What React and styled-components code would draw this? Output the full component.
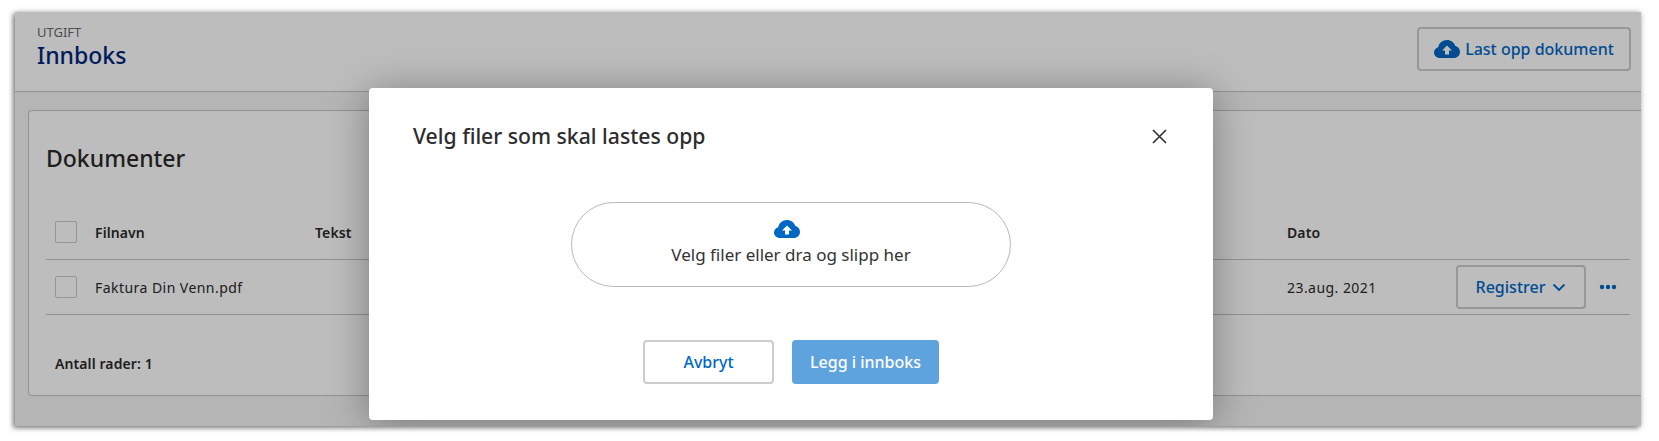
import React from "react";
import styled, { createGlobalStyle } from "styled-components";

const FONT = `"Noto Sans", Lato, sans-serif`;

const Global = createGlobalStyle`
  html, body { margin: 0; padding: 0; background: #fff; }
  body { font-family: ${FONT}; }
  * { box-sizing: border-box; }
`;

const Page = styled.div`
  width: 1659px;
  height: 441px;
  padding: 12px 18px 15px 15px;
  overflow: hidden;
`;

const Window = styled.div`
  position: relative;
  height: 414px;
  background: #f5f5f5;
  box-shadow: -2px 2px 5px rgba(0, 0, 0, 0.45), 0 0 6px rgba(0, 0, 0, 0.2);
`;

const Clip = styled.div`
  position: absolute;
  inset: 0;
  overflow: hidden;
`;

const Header = styled.header`
  height: 80px;
  background: #fff;
  border-bottom: 1px solid #c4c4c4;
  display: flex;
  align-items: flex-start;
  justify-content: space-between;
  padding: 15px 10px 0 22px;
`;

const TitleBlock = styled.div`
  margin-top: -2px;
`;

const Eyebrow = styled.div`
  font-size: 13px;
  line-height: 14px;
  color: #6a6a6a;
`;

const PageTitle = styled.h1`
  margin: 3px 0 0;
  font-size: 23px;
  line-height: 27px;
  font-weight: 500;
  color: #00267a;
`;

const OutlineButton = styled.button`
  height: 44px;
  width: ${(p) => p.$w}px;
  background: #fff;
  border: 2px solid #ccc;
  border-radius: 4px;
  color: #0067c5;
  font: 500 16px ${FONT};
  display: inline-flex;
  align-items: center;
  justify-content: center;
  gap: ${(p) => p.$gap || 5}px;
  padding: 0;
`;

const Body = styled.main`
  padding: 18px 0 0 13px;
`;

const Card = styled.section`
  height: 286px;
  margin-right: -1px;
  background: #fff;
  border: 1px solid #c4c4c4;
  border-right: none;
  border-radius: 4px 0 0 4px;
  padding: 32px 12px 0 17px;
`;

const CardTitle = styled.h2`
  margin: 0;
  height: 62px;
  font-size: 23px;
  line-height: 30px;
  font-weight: 500;
  color: #2a2a2a;
`;

const Row = styled.div`
  display: grid;
  grid-template-columns: 40px 220px 1fr 169px 174px;
  align-items: center;
  height: 55px;
  padding-left: 9px;
  border-bottom: 1px solid #c4c4c4;
  font-size: 14px;
  letter-spacing: ${(p) => (p.$head ? 0.1 : 0.45)}px;
  color: #2a2a2a;
  font-weight: ${(p) => (p.$head ? 600 : 400)};
`;

const Check = styled.span`
  display: block;
  width: 22px;
  height: 22px;
  border: 1px solid #c8c8c8;
  border-radius: 2px;
  background: #fff;
`;

const Actions = styled.div`
  display: flex;
  align-items: center;
  gap: 13px;
`;

const Dots = styled.svg`
  width: 18px;
  height: 6px;
  color: #0067c5;
`;

const Count = styled.div`
  margin: 40px 0 0 9px;
  font-size: 14px;
  line-height: 18px;
  font-weight: 600;
  letter-spacing: 0.1px;
  color: #2a2a2a;
`;

const Overlay = styled.div`
  position: absolute;
  inset: 0;
  background: rgba(0, 0, 0, 0.26);
`;

const Modal = styled.div`
  position: absolute;
  left: 354px;
  top: 76px;
  width: 844px;
  height: 332px;
  background: #fff;
  border-radius: 4px;
  box-shadow: 0 4px 40px rgba(0, 0, 0, 0.35);
  padding: 34px 44px 0 44px;
`;

const ModalHead = styled.div`
  display: flex;
  align-items: center;
  justify-content: space-between;
  height: 28px;
`;

const ModalTitle = styled.h2`
  margin: 0;
  font-size: 21.2px;
  line-height: 28px;
  font-weight: 500;
  color: #2c2c2c;
`;

const Close = styled.button`
  width: 20px;
  height: 20px;
  padding: 0;
  border: 0;
  background: none;
  color: #333;
  display: flex;
  align-items: center;
  justify-content: center;
`;

const Drop = styled.div`
  width: 440px;
  height: 85px;
  margin: 52px 0 0 158px;
  border: 1px solid #b8b8b8;
  border-radius: 43px;
  display: flex;
  flex-direction: column;
  align-items: center;
  padding-top: 17px;
  font-size: 17px;
  line-height: 20px;
  color: #333;
`;

const DropIcon = styled.span`
  display: flex;
  height: 18px;
  margin: 0 8px 7px 0;
  color: #0067c5;
`;

const Footer = styled.div`
  display: flex;
  align-items: center;
  gap: 18px;
  margin: 53px 0 0 230px;
`;

const PrimaryButton = styled.button`
  width: 147px;
  height: 44px;
  padding: 0;
  border: 0;
  border-radius: 4px;
  background: #5ea3de;
  color: #fff;
  font: 500 16px ${FONT};
`;

const Cloud = ({ w = 26, h = 18 }) => (
  <svg width={w} height={h} viewBox="0 0 26 18" aria-hidden="true">
    <path
      fill="currentColor"
      d="M6 18C2.700 18 0 15.600 0 12.500 0 10 1.700 8 4.200 7.300 5 3 8.700 0 13 0c3.800 0 7 2.300 8.200 5.800 2.800.800 4.800 3.300 4.800 6.200 0 3.400-2.900 6-6.300 6Z"
    />
    <path fill="#fff" d="M13 5.500 18 10.500H15v4h-4v-4H8Z" />
  </svg>
);

const Chevron = () => (
  <svg width="14" height="9" viewBox="0 0 14 9" aria-hidden="true">
    <path d="M1.500 1.500 7 7l5.500-5.500" fill="none" stroke="currentColor" strokeWidth="1.800" />
  </svg>
);

export default function App() {
  return (
    <Page>
      <Global />
      <Window>
        <Clip>
          <Header>
            <TitleBlock>
              <Eyebrow>UTGIFT</Eyebrow>
              <PageTitle>Innboks</PageTitle>
            </TitleBlock>
            <OutlineButton $w={214}>
              <Cloud />
              Last opp dokument
            </OutlineButton>
          </Header>
          <Body>
            <Card>
              <CardTitle>Dokumenter</CardTitle>
              <Row $head>
                <Check />
                <span>Filnavn</span>
                <span>Tekst</span>
                <span>Dato</span>
                <span />
              </Row>
              <Row>
                <Check />
                <span>Faktura Din Venn.pdf</span>
                <span />
                <span>23.aug. 2021</span>
                <Actions>
                  <OutlineButton $w={130} $gap={7}>
                    Registrer
                    <Chevron />
                  </OutlineButton>
                  <Dots viewBox="0 0 18 6" aria-hidden="true">
                    <circle cx="3" cy="3" r="2.200" fill="currentColor" />
                    <circle cx="9" cy="3" r="2.200" fill="currentColor" />
                    <circle cx="15" cy="3" r="2.200" fill="currentColor" />
                  </Dots>
                </Actions>
              </Row>
              <Count>Antall rader: 1</Count>
            </Card>
          </Body>
          <Overlay />
          <Modal>
            <ModalHead>
              <ModalTitle>Velg filer som skal lastes opp</ModalTitle>
              <Close aria-label="Lukk">
                <svg width="15" height="15" viewBox="0 0 15 15" aria-hidden="true">
                  <path d="M1 1l13 13M14 1 1 14" stroke="currentColor" strokeWidth="1.700" fill="none" />
                </svg>
              </Close>
            </ModalHead>
            <Drop>
              <DropIcon>
                <Cloud />
              </DropIcon>
              Velg filer eller dra og slipp her
            </Drop>
            <Footer>
              <OutlineButton $w={131}>Avbryt</OutlineButton>
              <PrimaryButton>Legg i innboks</PrimaryButton>
            </Footer>
          </Modal>
        </Clip>
      </Window>
    </Page>
  );
}
